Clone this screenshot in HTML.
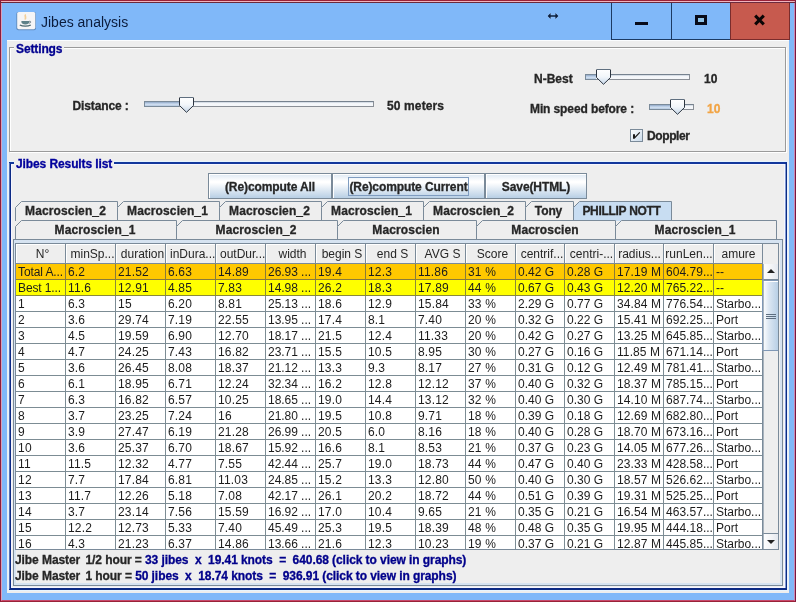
<!DOCTYPE html>
<html lang="en"><head><meta charset="utf-8"><title>Jibes analysis</title>
<style>
*{box-sizing:border-box;margin:0;padding:0}
html,body{width:796px;height:602px;overflow:hidden}
body{will-change:transform;background:#80b8f9;font-family:"Liberation Sans",sans-serif;font-size:12px;color:#262626;position:relative}
.abs{position:absolute}
.b,.tab,.btn,.gt{font-weight:bold;-webkit-text-stroke:0.3px currentColor}
.t{position:absolute;white-space:nowrap;line-height:14px;height:14px}
#frame{left:0;top:0;width:796px;height:602px;border:1px solid #9a2238;border-left-color:#8a1c3c;border-right-color:#7a1840;z-index:50;pointer-events:none}
#frame2{left:1px;top:1px;width:794px;height:600px;border:1px solid #f2b3bd;border-left-color:#dca0b8;border-bottom-color:#c8496a;border-right-color:#c98ab5;z-index:50}
#topdark{left:0;top:2px;width:796px;height:1px;background:#6b2a3c;z-index:50}
#client{left:7px;top:40px;width:782px;height:553px;background:#eee}
#title{left:41px;top:12px;font-size:14px;line-height:20px;height:20px;color:#0b1c3c}
.cap{position:absolute;top:3px;height:37px;border:1px solid #1c3a63;border-top:none}
#bmin{left:611px;width:61px}
#bmax{left:671px;width:60px}
#bclose{left:730px;width:60px;background:#c75a4e;border-color:#7a2c2c}
.grp{position:absolute;border:1px solid #9a9a9a;box-shadow:1px 1px 0 #fff, inset 1px 1px 0 #fff}
.gt{position:absolute;background:#eee;font-weight:bold;white-space:nowrap;line-height:14px;height:14px;padding:0 2px}
.track{position:absolute;height:6px;border:1px solid #8a8f96;border-top-color:#76828f;background:linear-gradient(#c9d2dd,#f6f8fb 40%,#f4f6f9)}
.fill{position:absolute;left:-1px;top:-1px;height:6px;border:1px solid #7a8a99;border-right:none;background:linear-gradient(#8fa5c4,#b9cde5 35%,#d3e0f0 70%,#adc3dd)}
.thumb{position:absolute;width:15px;height:16px}
.btn{position:absolute;top:173px;height:26px;letter-spacing:-0.1px;border:1px solid #7a8a99;background:linear-gradient(#dde8f3 0%,#ffffff 30%,#ffffff 36%,#b8cfe5 100%);font-weight:bold;text-align:center;line-height:26px;box-shadow:inset 1px 1px 0 #fff}
.tab{position:absolute;height:20px;font-weight:bold;text-align:center;line-height:21px;white-space:nowrap;letter-spacing:0.13px}
.tab svg{position:absolute;left:0;top:0}
.tab span{position:relative;left:-1px}
.hc{position:absolute;top:244px;height:20px;text-align:center;line-height:21px;white-space:nowrap;overflow:hidden;border-right:1px solid #7a8a99;border-bottom:1px solid #7a8a99;background:#eee;box-shadow:inset 1px 1px 0 #fff;padding-left:4px}
.r{position:absolute;left:16px;width:747px;height:16px;background:#fff}
.c{color:#1c1c1c;position:absolute;top:0;height:16px;line-height:17px;padding-left:2px;white-space:nowrap;overflow:hidden;border-right:1px solid var(--g,#7c8c94);border-bottom:1px solid var(--g,#7c8c94)}
</style></head>
<body>
<div class="abs" id="client"></div>
<div class="abs" style="left:7px;top:40px;width:782px;height:1px;background:#fbfdff"></div>
<svg class="abs" style="left:16px;top:11px" width="21" height="20" viewBox="0 0 21 20">
<rect x="0.3" y="1" width="19.7" height="18.2" rx="2" fill="#4f6f98" opacity="0.6"/>
<rect x="1.2" y="1" width="18.1" height="17.2" rx="1.6" fill="#f6f5f6"/>
<path d="M9.6 3.4 C7.6 5.2 10.6 6.2 8.8 8.4 C11.6 6.8 8.6 5.6 9.6 3.4Z" fill="#e9a23a" stroke="#f2c98a" stroke-width="1.2" opacity="0.85"/>
<path d="M5.4 10 H13.4 V11 C13.4 12.6 11.6 13.4 9.4 13.4 S5.4 12.6 5.4 11Z" fill="#5d8088"/>
<path d="M13.4 10.2 C15.2 10 15.2 12 13.2 12.2" stroke="#5d6f78" stroke-width="0.9" fill="none"/>
<path d="M3.8 14 C6.6 15.6 12 15.6 14.8 14" stroke="#4c6a72" stroke-width="1.3" fill="none"/>
</svg>
<div class="t" id="title">Jibes analysis</div>
<svg class="abs" style="left:547px;top:12px" width="12" height="8" viewBox="0 0 12 8"><path d="M0.6 4 L3.6 1 V3.2 H8.4 V1 L11.4 4 L8.4 7 V4.8 H3.6 V7 Z" fill="#0d1f3d" stroke="#cfe4fb" stroke-opacity="0.45" stroke-width="0.8" paint-order="stroke"/></svg>
<div class="cap" id="bmin"><div class="abs" style="left:23px;top:19px;width:13px;height:3px;background:#080b1a"></div></div>
<div class="cap" id="bmax"><div class="abs" style="left:23px;top:12px;width:12px;height:10px;border:3px solid #080b1a;border-left-width:3px;border-right-width:3px;background:#8ec2e8"></div></div>
<div class="cap" id="bclose"><svg class="abs" style="left:22px;top:11px" width="13" height="12" viewBox="0 0 13 12"><path d="M2.2 1.6 L10.8 10.4 M10.8 1.6 L2.2 10.4" stroke="#0a0505" stroke-width="3"/></svg></div>
<div class="grp" style="left:9px;top:47px;width:777px;height:105px"></div>
<div class="gt" style="left:14px;top:42px;color:#000090;letter-spacing:-0.12px">Settings</div>
<div class="t b" style="left:72.5px;top:99px;letter-spacing:-0.12px">Distance :</div>
<div class="t b" style="left:387px;top:99px;letter-spacing:0.12px">50 meters</div>
<div class="t b" style="left:534px;top:72px">N-Best</div>
<div class="t b" style="left:704px;top:72px">10</div>
<div class="t b" style="left:530px;top:102px;letter-spacing:-0.11px">Min speed before :</div>
<div class="t b" style="left:707px;top:102px;color:#f2a444">10</div>
<div class="t b" style="left:647px;top:129px;letter-spacing:-0.4px">Doppler</div>
<div class="track" style="left:144px;top:101px;width:230px"><div class="fill" style="width:35px"></div></div>
<svg class="thumb" style="left:179px;top:97px" width="15" height="16" viewBox="0 0 15 16"><defs><linearGradient id="g1" x1="0" y1="0" x2="0" y2="1"><stop offset="0" stop-color="#ffffff"/><stop offset="0.5" stop-color="#f2f6fa"/><stop offset="1" stop-color="#c5d6e8"/></linearGradient></defs><path d="M0.5 0.5 H14.5 V8.5 L7.5 15.3 L0.5 8.5 Z" fill="url(#g1)" stroke="none"/><path d="M0.5 0.5 V8.5 L7.5 15.3 L14.5 8.5 V0.5" fill="none" stroke="#2c3540" stroke-width="1"/><path d="M1 0.5 H14" stroke="#5f6f80" stroke-width="1"/></svg>
<div class="track" style="left:585px;top:74px;width:105px"><div class="fill" style="width:11px"></div></div>
<svg class="thumb" style="left:596px;top:69px" width="15" height="16" viewBox="0 0 15 16"><defs><linearGradient id="g2" x1="0" y1="0" x2="0" y2="1"><stop offset="0" stop-color="#ffffff"/><stop offset="0.5" stop-color="#f2f6fa"/><stop offset="1" stop-color="#c5d6e8"/></linearGradient></defs><path d="M0.5 0.5 H14.5 V8.5 L7.5 15.3 L0.5 8.5 Z" fill="url(#g2)" stroke="none"/><path d="M0.5 0.5 V8.5 L7.5 15.3 L14.5 8.5 V0.5" fill="none" stroke="#2c3540" stroke-width="1"/><path d="M1 0.5 H14" stroke="#5f6f80" stroke-width="1"/></svg>
<div class="track" style="left:649px;top:104px;width:45px"><div class="fill" style="width:21px"></div></div>
<svg class="thumb" style="left:670px;top:99px" width="15" height="16" viewBox="0 0 15 16"><defs><linearGradient id="g3" x1="0" y1="0" x2="0" y2="1"><stop offset="0" stop-color="#ffffff"/><stop offset="0.5" stop-color="#f2f6fa"/><stop offset="1" stop-color="#c5d6e8"/></linearGradient></defs><path d="M0.5 0.5 H14.5 V8.5 L7.5 15.3 L0.5 8.5 Z" fill="url(#g3)" stroke="none"/><path d="M0.5 0.5 V8.5 L7.5 15.3 L14.5 8.5 V0.5" fill="none" stroke="#2c3540" stroke-width="1"/><path d="M1 0.5 H14" stroke="#5f6f80" stroke-width="1"/></svg>
<svg class="abs" style="left:630px;top:129px" width="13" height="13" viewBox="0 0 13 13"><defs><linearGradient id="gc" x1="0" y1="0" x2="1" y2="1"><stop offset="0" stop-color="#ffffff"/><stop offset="1" stop-color="#c8d9ea"/></linearGradient></defs><rect x="0.5" y="0.5" width="12" height="12" fill="url(#gc)" stroke="#7a8a99"/><path d="M3 5.2 H5 V7.6 L9.4 3 L10.2 3.8 L4.6 9.8 H3 Z" fill="#1a1a1a"/></svg>
<div class="abs" style="left:9px;top:162px;width:778px;height:428px;border:2px solid #0c2a84;border-top-color:#12379c;box-shadow:0 0 0 1px #e6f4ff, inset 0 0 0 1px #f6f6ff;background:#eee"></div>
<div class="gt" style="left:14px;top:157px;color:#00009c;letter-spacing:-0.1px">Jibes Results list</div>
<div class="btn" style="left:208px;width:124px">(Re)compute All</div>
<div class="btn" style="left:332px;width:153px">(Re)compute Current<div class="abs" style="left:15px;top:3px;width:121px;height:19px;border:1px solid #7f9cc0"></div></div>
<div class="btn" style="left:485px;width:102px">Save(HTML)</div>
<div class="tab" style="left:15px;top:201px;width:103px"><svg width="103" height="20" viewBox="0 0 103 20"><path d="M0.5 20 V6.5 L6.5 0.5 H102.5 V20" fill="#eeeeee" stroke="#7a8a99"/></svg><span>Macroscien_2</span></div>
<div class="tab" style="left:117px;top:201px;width:103px"><svg width="103" height="20" viewBox="0 0 103 20"><path d="M0.5 20 V6.5 L6.5 0.5 H102.5 V20" fill="#eeeeee" stroke="#7a8a99"/></svg><span>Macroscien_1</span></div>
<div class="tab" style="left:219px;top:201px;width:103px"><svg width="103" height="20" viewBox="0 0 103 20"><path d="M0.5 20 V6.5 L6.5 0.5 H102.5 V20" fill="#eeeeee" stroke="#7a8a99"/></svg><span>Macroscien_2</span></div>
<div class="tab" style="left:321px;top:201px;width:103px"><svg width="103" height="20" viewBox="0 0 103 20"><path d="M0.5 20 V6.5 L6.5 0.5 H102.5 V20" fill="#eeeeee" stroke="#7a8a99"/></svg><span>Macroscien_1</span></div>
<div class="tab" style="left:423px;top:201px;width:103px"><svg width="103" height="20" viewBox="0 0 103 20"><path d="M0.5 20 V6.5 L6.5 0.5 H102.5 V20" fill="#eeeeee" stroke="#7a8a99"/></svg><span>Macroscien_2</span></div>
<div class="tab" style="left:525px;top:201px;width:49px;letter-spacing:-0.1px"><svg width="49" height="20" viewBox="0 0 49 20"><path d="M0.5 20 V6.5 L6.5 0.5 H48.5 V20" fill="#eeeeee" stroke="#7a8a99"/></svg><span>Tony</span></div>
<div class="tab" style="left:573px;top:201px;width:99px;letter-spacing:-0.3px"><svg width="99" height="20" viewBox="0 0 99 20"><path d="M0.5 20 V6.5 L6.5 0.5 H98.5 V20" fill="#c8ddf2" stroke="#7a8a99"/></svg><span>PHILLIP NOTT</span></div>
<div class="tab" style="left:15px;top:220px;width:162px"><svg width="162" height="20" viewBox="0 0 162 20"><path d="M0.5 20 V6.5 L6.5 0.5 H161.5 V20" fill="#eeeeee" stroke="#7a8a99"/></svg><span>Macroscien_1</span></div>
<div class="tab" style="left:176px;top:220px;width:162px"><svg width="162" height="20" viewBox="0 0 162 20"><path d="M0.5 20 V6.5 L6.5 0.5 H161.5 V20" fill="#eeeeee" stroke="#7a8a99"/></svg><span>Macroscien_2</span></div>
<div class="tab" style="left:337px;top:220px;width:140px"><svg width="140" height="20" viewBox="0 0 140 20"><path d="M0.5 20 V6.5 L6.5 0.5 H139.5 V20" fill="#eeeeee" stroke="#7a8a99"/></svg><span>Macroscien</span></div>
<div class="tab" style="left:476px;top:220px;width:140px"><svg width="140" height="20" viewBox="0 0 140 20"><path d="M0.5 20 V6.5 L6.5 0.5 H139.5 V20" fill="#eeeeee" stroke="#7a8a99"/></svg><span>Macroscien</span></div>
<div class="tab" style="left:615px;top:220px;width:162px"><svg width="162" height="20" viewBox="0 0 162 20"><path d="M0.5 20 V6.5 L6.5 0.5 H161.5 V20" fill="#eeeeee" stroke="#7a8a99"/></svg><span>Macroscien_1</span></div>
<div class="abs" style="left:13px;top:239px;width:770px;height:347px;border:1px solid #7a8a99;background:#eee;box-shadow:inset 0 0 0 2px #d6e3f1"></div>
<div class="abs" style="left:14px;top:240px;width:768px;height:3px;background:#d6e3f1"></div>
<div class="abs" style="left:15px;top:243px;width:764px;height:307px;border:1px solid #7a8a99;background:#fff;overflow:hidden"></div>
<div class="abs" style="left:16px;top:244px;width:762px;height:20px;background:#eee"></div>
<div class="hc" style="left:16px;width:50px;padding-left:4px">N°</div>
<div class="hc" style="left:66px;width:50px;padding-left:4px">minSp...</div>
<div class="hc" style="left:116px;width:50px;padding-left:4px">duration</div>
<div class="hc" style="left:166px;width:50px;padding-left:4px">inDura...</div>
<div class="hc" style="left:216px;width:50px;padding-left:4px">outDur...</div>
<div class="hc" style="left:266px;width:50px;padding-left:4px">width</div>
<div class="hc" style="left:316px;width:50px;padding-left:3px">begin S</div>
<div class="hc" style="left:366px;width:50px;padding-left:4px">end S</div>
<div class="hc" style="left:416px;width:50px;padding-left:4px">AVG S</div>
<div class="hc" style="left:466px;width:50px;padding-left:4px">Score</div>
<div class="hc" style="left:516px;width:49px;padding-left:4px">centrif...</div>
<div class="hc" style="left:565px;width:50px;padding-left:4px">centri-...</div>
<div class="hc" style="left:615px;width:49px;padding-left:1px">radius...</div>
<div class="hc" style="left:664px;width:50px;padding-left:1px">runLen...</div>
<div class="hc" style="left:714px;width:49px;padding-left:1px">amure</div>
<div class="abs" style="left:0;top:0;width:796px;height:549px;overflow:hidden">
<div class="r" style="top:264px;background:#ffc800;--g:#8a7a3a"><div class="c" style="left:0px;width:50px;letter-spacing:-0.10px">Total A...</div><div class="c" style="left:50px;width:50px;letter-spacing:0.11px">6.2</div><div class="c" style="left:100px;width:50px;letter-spacing:0.19px">21.52</div><div class="c" style="left:150px;width:50px;letter-spacing:0.16px">6.63</div><div class="c" style="left:200px;width:50px;letter-spacing:0.19px">14.89</div><div class="c" style="left:250px;width:50px;letter-spacing:-0.04px">26.93 ...</div><div class="c" style="left:300px;width:50px;letter-spacing:0.16px">19.4</div><div class="c" style="left:350px;width:50px;letter-spacing:0.16px">12.3</div><div class="c" style="left:400px;width:50px;letter-spacing:0.19px">11.86</div><div class="c" style="left:450px;width:50px;letter-spacing:0.16px">31 %</div><div class="c" style="left:500px;width:49px">0.42 G</div><div class="c" style="left:549px;width:50px">0.28 G</div><div class="c" style="left:599px;width:49px;letter-spacing:0.09px">17.19 M</div><div class="c" style="left:648px;width:50px;letter-spacing:0.03px">604.79...</div><div class="c" style="left:698px;width:49px">--</div></div>
<div class="r" style="top:280px;background:#ffff00;--g:#8a8a3a"><div class="c" style="left:0px;width:50px;letter-spacing:-0.11px">Best 1...</div><div class="c" style="left:50px;width:50px;letter-spacing:0.16px">11.6</div><div class="c" style="left:100px;width:50px;letter-spacing:0.19px">12.91</div><div class="c" style="left:150px;width:50px;letter-spacing:0.16px">4.85</div><div class="c" style="left:200px;width:50px;letter-spacing:0.16px">7.83</div><div class="c" style="left:250px;width:50px;letter-spacing:-0.04px">14.98 ...</div><div class="c" style="left:300px;width:50px;letter-spacing:0.16px">26.2</div><div class="c" style="left:350px;width:50px;letter-spacing:0.16px">18.3</div><div class="c" style="left:400px;width:50px;letter-spacing:0.19px">17.89</div><div class="c" style="left:450px;width:50px;letter-spacing:0.16px">44 %</div><div class="c" style="left:500px;width:49px">0.67 G</div><div class="c" style="left:549px;width:50px">0.43 G</div><div class="c" style="left:599px;width:49px;letter-spacing:0.09px">12.20 M</div><div class="c" style="left:648px;width:50px;letter-spacing:0.03px">765.22...</div><div class="c" style="left:698px;width:49px">--</div></div>
<div class="r" style="top:296px"><div class="c" style="left:0px;width:50px;letter-spacing:0.33px">1</div><div class="c" style="left:50px;width:50px;letter-spacing:0.11px">6.3</div><div class="c" style="left:100px;width:50px;letter-spacing:0.33px">15</div><div class="c" style="left:150px;width:50px;letter-spacing:0.16px">6.20</div><div class="c" style="left:200px;width:50px;letter-spacing:0.16px">8.81</div><div class="c" style="left:250px;width:50px;letter-spacing:-0.04px">25.13 ...</div><div class="c" style="left:300px;width:50px;letter-spacing:0.16px">18.6</div><div class="c" style="left:350px;width:50px;letter-spacing:0.16px">12.9</div><div class="c" style="left:400px;width:50px;letter-spacing:0.19px">15.84</div><div class="c" style="left:450px;width:50px;letter-spacing:0.16px">33 %</div><div class="c" style="left:500px;width:49px">2.29 G</div><div class="c" style="left:549px;width:50px">0.77 G</div><div class="c" style="left:599px;width:49px;letter-spacing:0.09px">34.84 M</div><div class="c" style="left:648px;width:50px;letter-spacing:0.03px">776.54...</div><div class="c" style="left:698px;width:49px;letter-spacing:-0.04px">Starbo...</div></div>
<div class="r" style="top:312px"><div class="c" style="left:0px;width:50px;letter-spacing:0.33px">2</div><div class="c" style="left:50px;width:50px;letter-spacing:0.11px">3.6</div><div class="c" style="left:100px;width:50px;letter-spacing:0.19px">29.74</div><div class="c" style="left:150px;width:50px;letter-spacing:0.16px">7.19</div><div class="c" style="left:200px;width:50px;letter-spacing:0.19px">22.55</div><div class="c" style="left:250px;width:50px;letter-spacing:-0.04px">13.95 ...</div><div class="c" style="left:300px;width:50px;letter-spacing:0.16px">17.4</div><div class="c" style="left:350px;width:50px;letter-spacing:0.11px">8.1</div><div class="c" style="left:400px;width:50px;letter-spacing:0.16px">7.40</div><div class="c" style="left:450px;width:50px;letter-spacing:0.16px">20 %</div><div class="c" style="left:500px;width:49px">0.32 G</div><div class="c" style="left:549px;width:50px">0.22 G</div><div class="c" style="left:599px;width:49px;letter-spacing:0.09px">15.41 M</div><div class="c" style="left:648px;width:50px;letter-spacing:0.03px">692.25...</div><div class="c" style="left:698px;width:49px">Port</div></div>
<div class="r" style="top:328px"><div class="c" style="left:0px;width:50px;letter-spacing:0.33px">3</div><div class="c" style="left:50px;width:50px;letter-spacing:0.11px">4.5</div><div class="c" style="left:100px;width:50px;letter-spacing:0.19px">19.59</div><div class="c" style="left:150px;width:50px;letter-spacing:0.16px">6.90</div><div class="c" style="left:200px;width:50px;letter-spacing:0.19px">12.70</div><div class="c" style="left:250px;width:50px;letter-spacing:-0.04px">18.17 ...</div><div class="c" style="left:300px;width:50px;letter-spacing:0.16px">21.5</div><div class="c" style="left:350px;width:50px;letter-spacing:0.16px">12.4</div><div class="c" style="left:400px;width:50px;letter-spacing:0.19px">11.33</div><div class="c" style="left:450px;width:50px;letter-spacing:0.16px">20 %</div><div class="c" style="left:500px;width:49px">0.42 G</div><div class="c" style="left:549px;width:50px">0.27 G</div><div class="c" style="left:599px;width:49px;letter-spacing:0.09px">13.25 M</div><div class="c" style="left:648px;width:50px;letter-spacing:0.03px">645.85...</div><div class="c" style="left:698px;width:49px;letter-spacing:-0.04px">Starbo...</div></div>
<div class="r" style="top:344px"><div class="c" style="left:0px;width:50px;letter-spacing:0.33px">4</div><div class="c" style="left:50px;width:50px;letter-spacing:0.11px">4.7</div><div class="c" style="left:100px;width:50px;letter-spacing:0.19px">24.25</div><div class="c" style="left:150px;width:50px;letter-spacing:0.16px">7.43</div><div class="c" style="left:200px;width:50px;letter-spacing:0.19px">16.82</div><div class="c" style="left:250px;width:50px;letter-spacing:-0.04px">23.71 ...</div><div class="c" style="left:300px;width:50px;letter-spacing:0.16px">15.5</div><div class="c" style="left:350px;width:50px;letter-spacing:0.16px">10.5</div><div class="c" style="left:400px;width:50px;letter-spacing:0.16px">8.95</div><div class="c" style="left:450px;width:50px;letter-spacing:0.16px">30 %</div><div class="c" style="left:500px;width:49px">0.27 G</div><div class="c" style="left:549px;width:50px">0.16 G</div><div class="c" style="left:599px;width:49px;letter-spacing:0.09px">11.85 M</div><div class="c" style="left:648px;width:50px;letter-spacing:0.03px">671.14...</div><div class="c" style="left:698px;width:49px">Port</div></div>
<div class="r" style="top:360px"><div class="c" style="left:0px;width:50px;letter-spacing:0.33px">5</div><div class="c" style="left:50px;width:50px;letter-spacing:0.11px">3.6</div><div class="c" style="left:100px;width:50px;letter-spacing:0.19px">26.45</div><div class="c" style="left:150px;width:50px;letter-spacing:0.16px">8.08</div><div class="c" style="left:200px;width:50px;letter-spacing:0.19px">18.37</div><div class="c" style="left:250px;width:50px;letter-spacing:-0.04px">21.12 ...</div><div class="c" style="left:300px;width:50px;letter-spacing:0.16px">13.3</div><div class="c" style="left:350px;width:50px;letter-spacing:0.11px">9.3</div><div class="c" style="left:400px;width:50px;letter-spacing:0.16px">8.17</div><div class="c" style="left:450px;width:50px;letter-spacing:0.16px">27 %</div><div class="c" style="left:500px;width:49px">0.31 G</div><div class="c" style="left:549px;width:50px">0.12 G</div><div class="c" style="left:599px;width:49px;letter-spacing:0.09px">12.49 M</div><div class="c" style="left:648px;width:50px;letter-spacing:0.03px">781.41...</div><div class="c" style="left:698px;width:49px;letter-spacing:-0.04px">Starbo...</div></div>
<div class="r" style="top:376px"><div class="c" style="left:0px;width:50px;letter-spacing:0.33px">6</div><div class="c" style="left:50px;width:50px;letter-spacing:0.11px">6.1</div><div class="c" style="left:100px;width:50px;letter-spacing:0.19px">18.95</div><div class="c" style="left:150px;width:50px;letter-spacing:0.16px">6.71</div><div class="c" style="left:200px;width:50px;letter-spacing:0.19px">12.24</div><div class="c" style="left:250px;width:50px;letter-spacing:-0.04px">32.34 ...</div><div class="c" style="left:300px;width:50px;letter-spacing:0.16px">16.2</div><div class="c" style="left:350px;width:50px;letter-spacing:0.16px">12.8</div><div class="c" style="left:400px;width:50px;letter-spacing:0.19px">12.12</div><div class="c" style="left:450px;width:50px;letter-spacing:0.16px">37 %</div><div class="c" style="left:500px;width:49px">0.40 G</div><div class="c" style="left:549px;width:50px">0.32 G</div><div class="c" style="left:599px;width:49px;letter-spacing:0.09px">18.37 M</div><div class="c" style="left:648px;width:50px;letter-spacing:0.03px">785.15...</div><div class="c" style="left:698px;width:49px">Port</div></div>
<div class="r" style="top:392px"><div class="c" style="left:0px;width:50px;letter-spacing:0.33px">7</div><div class="c" style="left:50px;width:50px;letter-spacing:0.11px">6.3</div><div class="c" style="left:100px;width:50px;letter-spacing:0.19px">16.82</div><div class="c" style="left:150px;width:50px;letter-spacing:0.16px">6.57</div><div class="c" style="left:200px;width:50px;letter-spacing:0.19px">10.25</div><div class="c" style="left:250px;width:50px;letter-spacing:-0.04px">18.65 ...</div><div class="c" style="left:300px;width:50px;letter-spacing:0.16px">19.0</div><div class="c" style="left:350px;width:50px;letter-spacing:0.16px">14.4</div><div class="c" style="left:400px;width:50px;letter-spacing:0.19px">13.12</div><div class="c" style="left:450px;width:50px;letter-spacing:0.16px">32 %</div><div class="c" style="left:500px;width:49px">0.40 G</div><div class="c" style="left:549px;width:50px">0.30 G</div><div class="c" style="left:599px;width:49px;letter-spacing:0.09px">14.10 M</div><div class="c" style="left:648px;width:50px;letter-spacing:0.03px">687.74...</div><div class="c" style="left:698px;width:49px;letter-spacing:-0.04px">Starbo...</div></div>
<div class="r" style="top:408px"><div class="c" style="left:0px;width:50px;letter-spacing:0.33px">8</div><div class="c" style="left:50px;width:50px;letter-spacing:0.11px">3.7</div><div class="c" style="left:100px;width:50px;letter-spacing:0.19px">23.25</div><div class="c" style="left:150px;width:50px;letter-spacing:0.16px">7.24</div><div class="c" style="left:200px;width:50px;letter-spacing:0.33px">16</div><div class="c" style="left:250px;width:50px;letter-spacing:-0.04px">21.80 ...</div><div class="c" style="left:300px;width:50px;letter-spacing:0.16px">19.5</div><div class="c" style="left:350px;width:50px;letter-spacing:0.16px">10.8</div><div class="c" style="left:400px;width:50px;letter-spacing:0.16px">9.71</div><div class="c" style="left:450px;width:50px;letter-spacing:0.16px">18 %</div><div class="c" style="left:500px;width:49px">0.39 G</div><div class="c" style="left:549px;width:50px">0.18 G</div><div class="c" style="left:599px;width:49px;letter-spacing:0.09px">12.69 M</div><div class="c" style="left:648px;width:50px;letter-spacing:0.03px">682.80...</div><div class="c" style="left:698px;width:49px">Port</div></div>
<div class="r" style="top:424px"><div class="c" style="left:0px;width:50px;letter-spacing:0.33px">9</div><div class="c" style="left:50px;width:50px;letter-spacing:0.11px">3.9</div><div class="c" style="left:100px;width:50px;letter-spacing:0.19px">27.47</div><div class="c" style="left:150px;width:50px;letter-spacing:0.16px">6.19</div><div class="c" style="left:200px;width:50px;letter-spacing:0.19px">21.28</div><div class="c" style="left:250px;width:50px;letter-spacing:-0.04px">26.99 ...</div><div class="c" style="left:300px;width:50px;letter-spacing:0.16px">20.5</div><div class="c" style="left:350px;width:50px;letter-spacing:0.11px">6.0</div><div class="c" style="left:400px;width:50px;letter-spacing:0.16px">8.16</div><div class="c" style="left:450px;width:50px;letter-spacing:0.16px">18 %</div><div class="c" style="left:500px;width:49px">0.40 G</div><div class="c" style="left:549px;width:50px">0.28 G</div><div class="c" style="left:599px;width:49px;letter-spacing:0.09px">18.70 M</div><div class="c" style="left:648px;width:50px;letter-spacing:0.03px">673.16...</div><div class="c" style="left:698px;width:49px">Port</div></div>
<div class="r" style="top:440px"><div class="c" style="left:0px;width:50px;letter-spacing:0.33px">10</div><div class="c" style="left:50px;width:50px;letter-spacing:0.11px">3.6</div><div class="c" style="left:100px;width:50px;letter-spacing:0.19px">25.37</div><div class="c" style="left:150px;width:50px;letter-spacing:0.16px">6.70</div><div class="c" style="left:200px;width:50px;letter-spacing:0.19px">18.67</div><div class="c" style="left:250px;width:50px;letter-spacing:-0.04px">15.92 ...</div><div class="c" style="left:300px;width:50px;letter-spacing:0.16px">16.6</div><div class="c" style="left:350px;width:50px;letter-spacing:0.11px">8.1</div><div class="c" style="left:400px;width:50px;letter-spacing:0.16px">8.53</div><div class="c" style="left:450px;width:50px;letter-spacing:0.16px">21 %</div><div class="c" style="left:500px;width:49px">0.37 G</div><div class="c" style="left:549px;width:50px">0.23 G</div><div class="c" style="left:599px;width:49px;letter-spacing:0.09px">14.05 M</div><div class="c" style="left:648px;width:50px;letter-spacing:0.03px">677.26...</div><div class="c" style="left:698px;width:49px;letter-spacing:-0.04px">Starbo...</div></div>
<div class="r" style="top:456px"><div class="c" style="left:0px;width:50px;letter-spacing:0.33px">11</div><div class="c" style="left:50px;width:50px;letter-spacing:0.16px">11.5</div><div class="c" style="left:100px;width:50px;letter-spacing:0.19px">12.32</div><div class="c" style="left:150px;width:50px;letter-spacing:0.16px">4.77</div><div class="c" style="left:200px;width:50px;letter-spacing:0.16px">7.55</div><div class="c" style="left:250px;width:50px;letter-spacing:-0.04px">42.44 ...</div><div class="c" style="left:300px;width:50px;letter-spacing:0.16px">25.7</div><div class="c" style="left:350px;width:50px;letter-spacing:0.16px">19.0</div><div class="c" style="left:400px;width:50px;letter-spacing:0.19px">18.73</div><div class="c" style="left:450px;width:50px;letter-spacing:0.16px">44 %</div><div class="c" style="left:500px;width:49px">0.47 G</div><div class="c" style="left:549px;width:50px">0.40 G</div><div class="c" style="left:599px;width:49px;letter-spacing:0.09px">23.33 M</div><div class="c" style="left:648px;width:50px;letter-spacing:0.03px">428.58...</div><div class="c" style="left:698px;width:49px">Port</div></div>
<div class="r" style="top:472px"><div class="c" style="left:0px;width:50px;letter-spacing:0.33px">12</div><div class="c" style="left:50px;width:50px;letter-spacing:0.11px">7.7</div><div class="c" style="left:100px;width:50px;letter-spacing:0.19px">17.84</div><div class="c" style="left:150px;width:50px;letter-spacing:0.16px">6.81</div><div class="c" style="left:200px;width:50px;letter-spacing:0.19px">11.03</div><div class="c" style="left:250px;width:50px;letter-spacing:-0.04px">24.85 ...</div><div class="c" style="left:300px;width:50px;letter-spacing:0.16px">15.2</div><div class="c" style="left:350px;width:50px;letter-spacing:0.16px">13.3</div><div class="c" style="left:400px;width:50px;letter-spacing:0.19px">12.80</div><div class="c" style="left:450px;width:50px;letter-spacing:0.16px">50 %</div><div class="c" style="left:500px;width:49px">0.40 G</div><div class="c" style="left:549px;width:50px">0.30 G</div><div class="c" style="left:599px;width:49px;letter-spacing:0.09px">18.57 M</div><div class="c" style="left:648px;width:50px;letter-spacing:0.03px">526.62...</div><div class="c" style="left:698px;width:49px;letter-spacing:-0.04px">Starbo...</div></div>
<div class="r" style="top:488px"><div class="c" style="left:0px;width:50px;letter-spacing:0.33px">13</div><div class="c" style="left:50px;width:50px;letter-spacing:0.16px">11.7</div><div class="c" style="left:100px;width:50px;letter-spacing:0.19px">12.26</div><div class="c" style="left:150px;width:50px;letter-spacing:0.16px">5.18</div><div class="c" style="left:200px;width:50px;letter-spacing:0.16px">7.08</div><div class="c" style="left:250px;width:50px;letter-spacing:-0.04px">42.17 ...</div><div class="c" style="left:300px;width:50px;letter-spacing:0.16px">26.1</div><div class="c" style="left:350px;width:50px;letter-spacing:0.16px">20.2</div><div class="c" style="left:400px;width:50px;letter-spacing:0.19px">18.72</div><div class="c" style="left:450px;width:50px;letter-spacing:0.16px">44 %</div><div class="c" style="left:500px;width:49px">0.51 G</div><div class="c" style="left:549px;width:50px">0.39 G</div><div class="c" style="left:599px;width:49px;letter-spacing:0.09px">19.31 M</div><div class="c" style="left:648px;width:50px;letter-spacing:0.03px">525.25...</div><div class="c" style="left:698px;width:49px">Port</div></div>
<div class="r" style="top:504px"><div class="c" style="left:0px;width:50px;letter-spacing:0.33px">14</div><div class="c" style="left:50px;width:50px;letter-spacing:0.11px">3.7</div><div class="c" style="left:100px;width:50px;letter-spacing:0.19px">23.14</div><div class="c" style="left:150px;width:50px;letter-spacing:0.16px">7.56</div><div class="c" style="left:200px;width:50px;letter-spacing:0.19px">15.59</div><div class="c" style="left:250px;width:50px;letter-spacing:-0.04px">16.92 ...</div><div class="c" style="left:300px;width:50px;letter-spacing:0.16px">17.0</div><div class="c" style="left:350px;width:50px;letter-spacing:0.16px">10.4</div><div class="c" style="left:400px;width:50px;letter-spacing:0.16px">9.65</div><div class="c" style="left:450px;width:50px;letter-spacing:0.16px">21 %</div><div class="c" style="left:500px;width:49px">0.35 G</div><div class="c" style="left:549px;width:50px">0.21 G</div><div class="c" style="left:599px;width:49px;letter-spacing:0.09px">16.54 M</div><div class="c" style="left:648px;width:50px;letter-spacing:0.03px">463.57...</div><div class="c" style="left:698px;width:49px;letter-spacing:-0.04px">Starbo...</div></div>
<div class="r" style="top:520px"><div class="c" style="left:0px;width:50px;letter-spacing:0.33px">15</div><div class="c" style="left:50px;width:50px;letter-spacing:0.16px">12.2</div><div class="c" style="left:100px;width:50px;letter-spacing:0.19px">12.73</div><div class="c" style="left:150px;width:50px;letter-spacing:0.16px">5.33</div><div class="c" style="left:200px;width:50px;letter-spacing:0.16px">7.40</div><div class="c" style="left:250px;width:50px;letter-spacing:-0.04px">45.49 ...</div><div class="c" style="left:300px;width:50px;letter-spacing:0.16px">25.3</div><div class="c" style="left:350px;width:50px;letter-spacing:0.16px">19.5</div><div class="c" style="left:400px;width:50px;letter-spacing:0.19px">18.39</div><div class="c" style="left:450px;width:50px;letter-spacing:0.16px">48 %</div><div class="c" style="left:500px;width:49px">0.48 G</div><div class="c" style="left:549px;width:50px">0.35 G</div><div class="c" style="left:599px;width:49px;letter-spacing:0.09px">19.95 M</div><div class="c" style="left:648px;width:50px;letter-spacing:0.03px">444.18...</div><div class="c" style="left:698px;width:49px">Port</div></div>
<div class="r" style="top:536px"><div class="c" style="left:0px;width:50px;letter-spacing:0.33px">16</div><div class="c" style="left:50px;width:50px;letter-spacing:0.11px">4.3</div><div class="c" style="left:100px;width:50px;letter-spacing:0.19px">21.23</div><div class="c" style="left:150px;width:50px;letter-spacing:0.16px">6.37</div><div class="c" style="left:200px;width:50px;letter-spacing:0.19px">14.86</div><div class="c" style="left:250px;width:50px;letter-spacing:-0.04px">13.66 ...</div><div class="c" style="left:300px;width:50px;letter-spacing:0.16px">21.6</div><div class="c" style="left:350px;width:50px;letter-spacing:0.16px">12.3</div><div class="c" style="left:400px;width:50px;letter-spacing:0.19px">10.23</div><div class="c" style="left:450px;width:50px;letter-spacing:0.16px">19 %</div><div class="c" style="left:500px;width:49px">0.37 G</div><div class="c" style="left:549px;width:50px">0.21 G</div><div class="c" style="left:599px;width:49px;letter-spacing:0.09px">12.87 M</div><div class="c" style="left:648px;width:50px;letter-spacing:0.03px">445.85...</div><div class="c" style="left:698px;width:49px;letter-spacing:-0.04px">Starbo...</div></div>
</div>
<div class="abs" style="left:762px;top:264px;width:16px;height:285px;background:#eee;border-left:1px solid #7a8a99"></div>
<div class="abs" style="left:762px;top:264px;width:16px;height:16px;border:1px solid #7a8a99;border-top:none;border-right:none;background:linear-gradient(90deg,#fff,#f3f4f6 55%,#e4e8ee)"><svg class="abs" style="left:4px;top:5px" width="8" height="4" viewBox="0 0 8 4"><path d="M0 4 L4 0 L8 4Z" fill="#222"/></svg></div>
<div class="abs" style="left:762px;top:533px;width:16px;height:16px;border:1px solid #7a8a99;border-right:none;border-bottom:none;background:linear-gradient(90deg,#fff,#f3f4f6 55%,#e4e8ee)"><svg class="abs" style="left:4px;top:6px" width="8" height="4" viewBox="0 0 8 4"><path d="M0 0 L4 4 L8 0Z" fill="#222"/></svg></div>
<div class="abs" style="left:762px;top:280px;width:16px;height:71px;border:1px solid #7f97b5;border-right:none;background:linear-gradient(90deg,#fff,#dbe6f2 40%,#b8cfe5);box-shadow:inset 1px 1px 0 #fff"><div class="abs" style="left:3px;top:33px;width:10px;height:1px;background:#5d6e80;box-shadow:0 2px 0 #5d6e80,0 4px 0 #5d6e80"></div></div>
<div class="abs" style="left:763px;top:264px;width:1px;height:285px;background:#8f9dab;opacity:.75"></div>
<div class="abs" style="left:785px;top:164px;width:1px;height:424px;background:#7f9ad0"></div>
<div class="abs" style="left:9px;top:163px;width:1px;height:426px;background:#5a72b4"></div>
<div class="t b" style="left:15px;top:553px;letter-spacing:-0.075px">Jibe Master <span style="margin-left:2px">1/2</span> hour = <span style="color:#00008b">33 jibes&nbsp; x&nbsp; 19.41 knots&nbsp; =&nbsp; 640.68 (click to view in graphs)</span></div>
<div class="t b" style="left:15px;top:569px;letter-spacing:-0.075px">Jibe Master <span style="margin-left:2px">1</span> hour = <span style="color:#00008b">50 jibes&nbsp; x&nbsp; 18.74 knots&nbsp; =&nbsp; 936.91 (click to view in graphs)</span></div>
<div class="abs" id="frame"></div><div class="abs" id="frame2"></div><div class="abs" id="topdark"></div>
</body></html>
